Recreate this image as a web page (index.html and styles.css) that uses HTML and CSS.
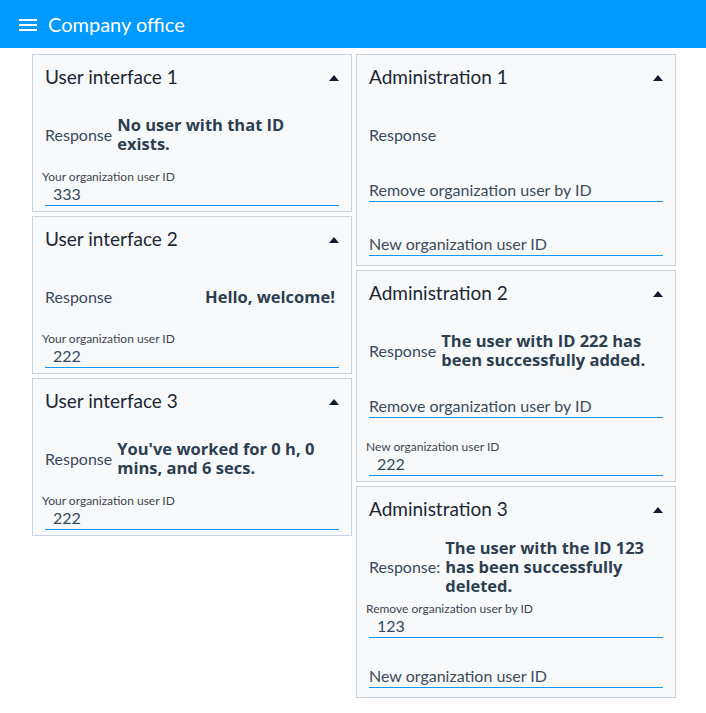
FILE: index.html
```html
<!DOCTYPE html>
<html lang="en">
<head>
<meta charset="utf-8">
<title>Company office</title>
<link rel="stylesheet" href="styles.css">
</head>
<body>
<header class="topbar">
  <svg class="menu-icon" width="18" height="12" viewBox="0 0 18 12" aria-hidden="true">
    <rect x="0" y="0" width="18" height="2"/>
    <rect x="0" y="5" width="18" height="2"/>
    <rect x="0" y="10" width="18" height="2"/>
  </svg>
  <span class="topbar-title">Company office</span>
</header>
<main class="board">
  <div class="column">
    <section class="card">
      <div class="card-head"><h2 class="card-title">User interface 1</h2><span class="caret"></span></div>
      <div class="response"><span class="response-label">Response</span><strong class="response-value">No user with that ID exists.</strong></div>
      <div class="field field--filled"><span class="field-label">Your organization user ID</span><span class="field-value">333</span><span class="field-line"></span></div>
    </section>
    <section class="card">
      <div class="card-head"><h2 class="card-title">User interface 2</h2><span class="caret"></span></div>
      <div class="response"><span class="response-label">Response</span><strong class="response-value">Hello, welcome!</strong></div>
      <div class="field field--filled"><span class="field-label">Your organization user ID</span><span class="field-value">222</span><span class="field-line"></span></div>
    </section>
    <section class="card">
      <div class="card-head"><h2 class="card-title">User interface 3</h2><span class="caret"></span></div>
      <div class="response"><span class="response-label">Response</span><strong class="response-value">You've worked for 0 h, 0 mins, and 6 secs.</strong></div>
      <div class="field field--filled"><span class="field-label">Your organization user ID</span><span class="field-value">222</span><span class="field-line"></span></div>
    </section>
  </div>
  <div class="column">
    <section class="card">
      <div class="card-head"><h2 class="card-title">Administration 1</h2><span class="caret"></span></div>
      <div class="response"><span class="response-label">Response</span></div>
      <div class="field"><span class="field-placeholder">Remove organization user by ID</span><span class="field-line"></span></div>
      <div class="field"><span class="field-placeholder">New organization user ID</span><span class="field-line"></span></div>
    </section>
    <section class="card">
      <div class="card-head"><h2 class="card-title">Administration 2</h2><span class="caret"></span></div>
      <div class="response"><span class="response-label">Response</span><strong class="response-value">The user with ID 222 has been successfully added.</strong></div>
      <div class="field"><span class="field-placeholder">Remove organization user by ID</span><span class="field-line"></span></div>
      <div class="field field--filled"><span class="field-label">New organization user ID</span><span class="field-value">222</span><span class="field-line"></span></div>
    </section>
    <section class="card">
      <div class="card-head"><h2 class="card-title">Administration 3</h2><span class="caret"></span></div>
      <div class="response"><span class="response-label">Response:</span><strong class="response-value">The user with the ID 123 has been successfully deleted.</strong></div>
      <div class="field field--filled"><span class="field-label">Remove organization user by ID</span><span class="field-value">123</span><span class="field-line"></span></div>
      <div class="field"><span class="field-placeholder">New organization user ID</span><span class="field-line"></span></div>
    </section>
  </div>
</main>
</body>
</html>
```

FILE: styles.css
```css
* { box-sizing: border-box; }

body {
  margin: 0;
  background: #ffffff;
  font-family: Lato, "Open Sans", "DejaVu Sans", sans-serif;
  color: #2c3e50;
}

.topbar {
  height: 48px;
  background: #0099ff;
  display: flex;
  align-items: center;
  padding-left: 19px;
  gap: 11px;
}

.menu-icon {
  fill: #ffffff;
  display: block;
  margin-top: 1px;
}

.topbar-title {
  color: #ffffff;
  font-size: 20px;
  line-height: 24px;
}

.board {
  display: flex;
  gap: 4px;
  padding: 6px 0 0 32px;
}

.column {
  width: 320px;
  display: flex;
  flex-direction: column;
  gap: 4px;
}

.card {
  border: 1px solid #c9d3de;
  background: #f7f9fb;
  padding: 0 12px 4px 12px;
}

.card-head {
  height: 44px;
  display: flex;
  align-items: center;
  justify-content: space-between;
}

.card-title {
  margin: 0;
  font-size: 19px;
  font-weight: 400;
  line-height: 22px;
  color: #1c2733;
}

.caret {
  width: 0;
  height: 0;
  border-left: 5.5px solid transparent;
  border-right: 5.5px solid transparent;
  border-bottom: 6px solid #111a2b;
  margin-top: 1px;
}

.response {
  height: 70px;
  display: flex;
  align-items: center;
  gap: 5px;
  padding-right: 4px;
}

.response-label {
  font-size: 16px;
  line-height: 19px;
  color: #3b4a5c;
  flex: none;
}

.response-value {
  margin-left: auto;
  max-width: 218px;
  font-family: "Open Sans", Lato, sans-serif;
  font-size: 16.5px;
  line-height: 19px;
  font-weight: 700;
  color: #2c3e50;
}

.field {
  height: 38px;
  display: flex;
  flex-direction: column;
  padding-top: 13px;
}

.field + .field {
  margin-top: 16px;
}

.field-placeholder {
  font-size: 16px;
  line-height: 16px;
  color: #3d4b5b;
}

.field-placeholder + .field-line {
  margin-top: 3px;
}

.field--filled {
  padding-top: 1px;
}

.field-label {
  font-size: 12px;
  line-height: 14px;
  color: #3f4650;
  margin-left: -3px;
}

.field-value {
  font-size: 16px;
  line-height: 16px;
  color: #34495e;
  padding-left: 8px;
  margin-top: 2px;
}

.field-value + .field-line {
  margin-top: 3px;
}

.field-line {
  height: 1px;
  background: #1595ee;
  flex: none;
}
```
